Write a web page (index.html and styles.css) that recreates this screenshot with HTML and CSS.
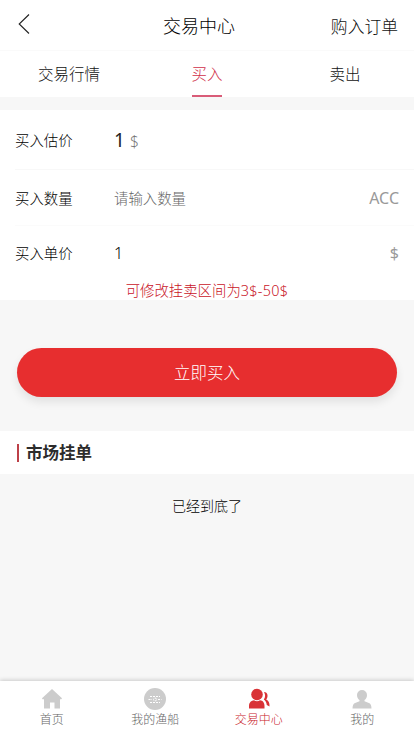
FILE: index.html
```html
<!DOCTYPE html>
<html lang="zh-CN">
<head>
<meta charset="utf-8">
<meta name="viewport" content="width=device-width, initial-scale=1">
<title>交易中心</title>
<link rel="stylesheet" href="styles.css">
</head>
<body>
<div class="app">
  <header class="header">
    <svg class="back" viewBox="0 0 12 22"><path d="M11 1.500 1.200 11 11 20.500"/></svg>
    <h1 class="title">交易中心</h1>
    <span class="orders">购入订单</span>
  </header>
  <nav class="tabs">
    <span class="tab">交易行情</span>
    <span class="tab tab-active">买入</span>
    <span class="tab">卖出</span>
  </nav>
  <section class="form">
    <div class="row row-estimate">
      <span class="label">买入估价</span>
      <span class="value"><span class="price">1</span><span class="currency">$</span></span>
    </div>
    <div class="row row-amount">
      <span class="label">买入数量</span>
      <span class="value placeholder">请输入数量</span>
      <span class="unit">ACC</span>
    </div>
    <div class="row row-unit">
      <span class="label">买入单价</span>
      <span class="value">1</span>
      <span class="unit">$</span>
    </div>
    <p class="hint">可修改挂卖区间为<span class="range">3$-50$</span></p>
  </section>
  <button class="submit">立即买入</button>
  <section class="market"><h2 class="market-title">市场挂单</h2></section>
  <p class="end">已经到底了</p>
  <nav class="bottom">
    <span class="item">
      <svg class="icon" viewBox="0 0 24 24"><path d="M12 2 22 11.300 21.300 12.200H20V21.500H14.500V15.500H10V21.500H4V12.200H2.500L2 11.300 12 2Z"/></svg>
      <span>首页</span>
    </span>
    <span class="item">
      <svg class="icon" viewBox="0 0 24 24"><circle cx="12" cy="12" r="11"/><g class="icon-detail"><path d="M7 9.500H17M7 15.500H17"/><path d="M5.500 12.500H9M15 12.500H18.500"/><circle cx="12" cy="12.500" r="1.500"/></g></svg>
      <span>我的渔船</span>
    </span>
    <span class="item item-active">
      <svg class="icon" viewBox="0 0 24 24"><circle cx="10" cy="7.500" r="5.800"/><path d="M2 21.500V19C2 15.500 4.500 13.500 7 13.300Q10 15 13 13.300C16 13.500 17.500 16 17.500 19V21.500Z"/><path d="M17 5C21 5 21.500 10 19.200 12.500 21.500 13.500 22.800 16 22.500 19.500L19.800 18C19.500 15.500 18.500 13.800 16.800 12.500 18.500 10 18.500 7.500 17 5Z"/></svg>
      <span>交易中心</span>
    </span>
    <span class="item">
      <svg class="icon" viewBox="0 0 24 24"><path d="M12 3A5 5 0 0 1 17 8C17 10.500 16 12 14.500 13V14.300L19.500 16.300Q21.300 17.300 21.500 21.500H2.500Q2.700 17.300 4.500 16.300L9.500 14.300V13C8 12 7 10.500 7 8A5 5 0 0 1 12 3Z"/></svg>
      <span>我的</span>
    </span>
  </nav>
</div>
</body>
</html>
```
FILE: styles.css
```css
* { box-sizing: border-box; }
body {
  margin: 0;
  background: #f7f7f7;
  color: #000;
  font-family: "Noto Sans", "Noto Sans CJK SC", sans-serif;
  font-size: 14.4px;
  font-weight: 300;
}
h1, h2, p { margin: 0; }
.app { height: 736px; display: flex; flex-direction: column; overflow: hidden; }
.header {
  height: 51px;
  flex: none;
  display: grid;
  grid-template-columns: 145px auto 1fr;
  align-items: center;
  padding: 2px 16px 0 18px;
  background: #fff;
  border-bottom: 1px solid #fafafa;
}
.back { width: 12px; height: 22px; margin-top: -4px; fill: none; stroke: #222; stroke-width: 1.1; }
.title { font-size: 18px; line-height: 26px; font-weight: 300; }
.orders { justify-self: end; font-size: 16.800px; line-height: 26px; margin-top: 1px; color: #111; }
.tabs {
  height: 46px;
  flex: none;
  display: flex;
  background: #fff;
  font-size: 15.500px;
  line-height: 47px;
  color: #111;
}
.tab { flex: 1; text-align: center; }
.tab-active { color: #d02f49; }
.tab-active::after {
  content: "";
  display: block;
  width: 30px;
  height: 2px;
  margin: -3px auto 0;
  background: #d95c78;
}
.form { height: 190px; flex: none; margin-top: 13px; background: #fff; }
.row { display: flex; align-items: center; margin-left: 15px; padding-right: 15px; }
.row-estimate { height: 60px; border-bottom: 1px solid #f8f8f8; }
.row-amount { height: 56px; border-bottom: 1px solid #fbfbfb; }
.row-unit { height: 53px; }
.label { width: 99px; flex: none; }
.value { flex: 1; }
.row-unit .value { font-size: 16px; }
.price { font-size: 19px; font-weight: 400; color: #222; }
.currency { margin-left: 5px; font-size: 15.500px; color: #777; }
.placeholder { color: #666; }
.unit { font-size: 16px; font-weight: 400; color: #999; }
.hint { padding-top: 2px; text-align: center; line-height: 20px; font-size: 14.400px; color: #c9141f; }
.range { letter-spacing: .3px; }
.submit {
  height: 49px;
  flex: none;
  margin: 48px 17px 0;
  padding: 0;
  border: 0;
  border-radius: 25px;
  background: #e72e2f;
  color: #fff;
  font: 300 16.500px/49px "Noto Sans", "Noto Sans CJK SC", sans-serif;
  box-shadow: 0 5px 10px rgba(0, 0, 0, .09);
}
.market {
  height: 43px;
  flex: none;
  display: flex;
  align-items: center;
  margin-top: 34px;
  padding-left: 17px;
  background: #fff;
}
.market-title {
  padding-left: 7px;
  border-left: 2px solid #bd4048;
  font-size: 16.500px;
  line-height: 18px;
  font-weight: 700;
  color: #2c2c2c;
}
.end { margin-top: 22px; line-height: 20px; font-size: 14px; text-align: center; }
.bottom {
  height: 55px;
  flex: none;
  display: flex;
  margin-top: auto;
  background: #fff;
  box-shadow: 0 -1px 4px rgba(0, 0, 0, .18);
}
.item {
  flex: 1;
  display: flex;
  flex-direction: column;
  align-items: center;
  padding-top: 6px;
  font-size: 12px;
  line-height: 18px;
  color: #666;
}
.icon { width: 24px; height: 24px; fill: #ccc; }
.icon-detail { fill: none; stroke: #fff; stroke-width: 1; stroke-dasharray: 2 1; }
.item-active { color: #c9222c; }
.item-active .icon { fill: #d93236; }
```
